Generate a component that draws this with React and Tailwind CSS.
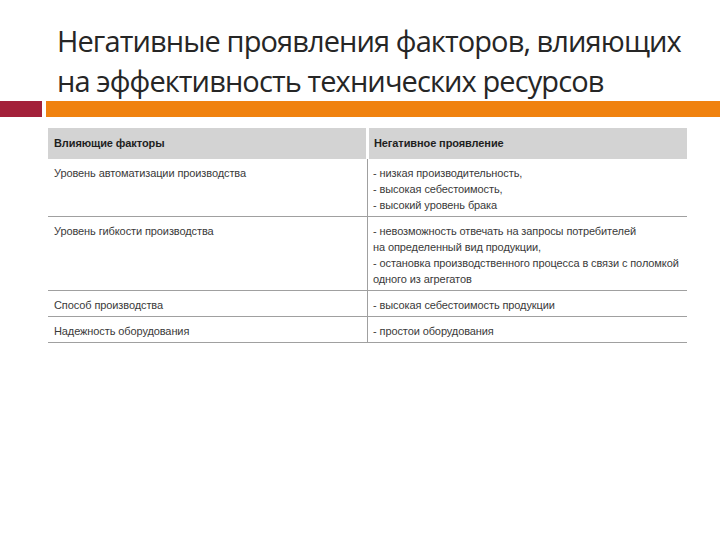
import React from 'react';

const rows = [
    { factor: 'Уровень автоматизации производства', effects: ['- низкая производительность,', '- высокая себестоимость,', '- высокий уровень брака'], h: 'h-[58px]' },
    { factor: 'Уровень гибкости производства', effects: ['- невозможность отвечать на запросы потребителей', 'на определенный вид продукции,', '- остановка производственного процесса в связи с поломкой', 'одного из агрегатов'], h: 'h-[74px]' },
    { factor: 'Способ производства', effects: ['- высокая себестоимость продукции'], h: 'h-[26px]' },
    { factor: 'Надежность оборудования', effects: ['- простои оборудования'], h: 'h-[26px]' },
];

const App = () => {
    return (
        <div className="w-[720px] h-[540px] bg-white overflow-hidden" style={{ fontFamily: '"Open Sans", sans-serif' }}>
            <div className="pl-[57px] pt-[21px] h-[101px] text-[29px] leading-[40px] text-[#262626] tracking-[-0.9px]">
                <div>Негативные проявления факторов, влияющих</div>
                <div>на эффективность технических ресурсов</div>
            </div>
            <div className="flex h-[16px]">
                <div className="w-[42px] bg-[#a3213a]"></div>
                <div className="w-[4px] bg-white"></div>
                <div className="flex-1 bg-[#f0820f]"></div>
            </div>
            <div className="ml-[48px] mt-[11px] w-[639px] text-[11px] text-[#3a3a3a] tracking-[-0.1px]" style={{ fontFamily: '"Liberation Sans", sans-serif' }}>
                <div className="flex h-[31px] font-bold text-[#1f1f1f]">
                    <div className="w-[318px] bg-[#d3d3d3] pl-[6px] flex items-center">Влияющие факторы</div>
                    <div className="w-[3px]"></div>
                    <div className="flex-1 bg-[#d3d3d3] pl-[5px] flex items-center">Негативное проявление</div>
                </div>
                {rows.map((r, i) => (
                    <div key={i} className={`flex ${r.h} border-b border-[#a0a0a0]`}>
                        <div className="w-[319px] pl-[6px] pt-[6px] leading-[16px]">{r.factor}</div>
                        <div className="flex-1 border-l border-[#a0a0a0] pl-[5px] pt-[6px] leading-[16px]">
                            {r.effects.map((e, j) => (
                                <div key={j}>{e}</div>
                            ))}
                        </div>
                    </div>
                ))}
            </div>
        </div>
    );
};

export default App;
